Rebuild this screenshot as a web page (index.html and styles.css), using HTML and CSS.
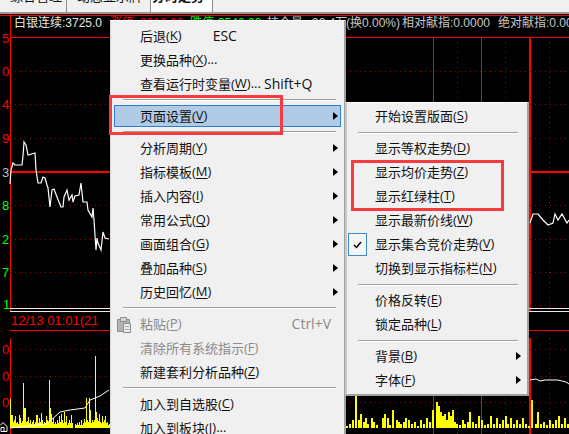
FILE: index.html
```html
<!DOCTYPE html>
<html lang="zh-CN">
<head>
  <meta charset="UTF-8" />
  <meta name="viewport" content="width=device-width, initial-scale=1.0" />
  <title>分时走势</title>
  <link rel="stylesheet" href="styles.css">
</head>
<body>
  <div class="app">
    <div class="tabs">
      <div class="tab tab-first">综合管理</div>
      <div class="tab tab-second">动态显示牌</div>
      <div class="tab tab-active">分时走势</div>
    </div>

    <div class="chart">
      <svg class="chart-svg" width="569" height="420" viewBox="0 14 569 420">
        <!-- solid grid -->
        <path class="line-red" d="M0 15H569M10 37H569M10 330H569M10 14V312M10 338V434M433 37V434M481 37V434" />
        <path class="line-red thick" d="M10 172H569M530 37V312M530 338V434" />
        <path class="line-white" d="M10 308.500H569M10 311.500H569" />

        <!-- dotted grid -->
        <path class="line-dot" d="M10 71.500H569M10 104.500H569M10 138.500H569M10 205.500H569M10 239.500H569M10 272.500H569M10 305.500H569M10 349.500H569M10 376.500H569M10 402.500H569M457.500 37V312M505.500 37V312M549.500 37V312M457.500 338V434M505.500 338V434M549.500 338V434" />

        <!-- volume bars -->
        <path class="line-yellow" d="M10.500 399V428M11.500 415V428M12.500 415V428M13.500 422V428M14.500 420V428M15.500 416V428M16.500 423V428M17.500 422V428M18.500 424V428M19.500 415V428M20.500 418V428M21.500 423V428M22.500 421V428M23.500 383V428M24.500 408V428M25.500 408V428M26.500 422V428M27.500 421V428M28.500 417V428M29.500 423V428M30.500 420V428M31.500 424V428M32.500 422V428M33.500 420V428M34.500 424V428M35.500 422V428M36.500 415V428M37.500 415V428M38.500 423V428M39.500 418V428M40.500 422V428M41.500 413V428M42.500 420V428M43.500 424V428M44.500 422V428M45.500 423V428M46.500 416V428M47.500 420V428M48.500 422V428M49.500 380V428M50.500 408V428M51.500 414V428M52.500 422V428M53.500 418V428M54.500 424V428M55.500 422V428M56.500 424V428M57.500 420V428M58.500 423V428M59.500 416V428M60.500 422V428M61.500 414V428M62.500 420V428M63.500 423V428M64.500 412V428M65.500 422V428M66.500 416V428M67.500 425V428M68.500 423V428M69.500 420V428M70.500 423V428M71.500 415V428M72.500 423V428M75.500 424V428M76.500 425V428M77.500 423V428M78.500 425V428M79.500 422V428M80.500 425V428M81.500 420V428M82.500 425V428M83.500 423V428M84.500 419V428M85.500 422V428M86.500 398V428M87.500 420V428M88.500 422V428M89.500 398V428M90.500 410V428M91.500 423V428M92.500 420V428M93.500 422V428M94.500 420V428M95.500 356V428M96.500 412V428M97.500 418V428M98.500 421V428M99.500 414V428M100.500 422V428M101.500 423V428M102.500 416V428M103.500 422V428M104.500 420V428M105.500 416V428M106.500 423V428M107.500 422V428M108.500 425V428M109.500 424V428" />
        <path class="line-yellow wide" d="M346.500 426V428M349.500 424V428M352.500 420V428M355.500 396V428M358.500 420V428M360.500 414V428M363.500 422V428M365.500 418V428M367.500 424V428M371.500 418V428M373.500 422V428M376.500 425V428M382.500 418V428M384.500 414V428M387.500 418V428M389.500 425V428M392.500 410V428M396.500 420V428M398.500 422V428M400.500 424V428M403.500 422V428M405.500 418V428M408.500 420V428M411.500 424V428M414.500 422V428M417.500 426V428M420.500 420V428M423.500 424V428M426.500 418V428M429.500 422V428M432.500 410V428M436.500 402V428M438.500 406V428M440.500 412V428M442.500 416V428M444.500 414V428M446.500 420V428M448.500 412V428M450.500 416V428M452.500 410V428M454.500 422V428M456.500 424V428M459.500 425V428M462.500 420V428M464.500 424V428M467.500 422V428M469.500 412V428M472.500 422V428M475.500 424V428M478.500 416V428M481.500 420V428M484.500 425V428M487.500 424V428M490.500 416V428M493.500 424V428M496.500 418V428M499.500 424V428M502.500 420V428M505.500 416V428M507.500 424V428M510.500 418V428M513.500 424V428M516.500 420V428M519.500 424V428M522.500 418V428M525.500 424V428M528.500 426V428M531.500 400V428M535.500 424V428M537.500 412V428M540.500 424V428M543.500 422V428M546.500 425V428M549.500 420V428M552.500 424V428M555.500 420V428M558.500 416V428M561.500 424V428M564.500 418V428M567.500 424V428" />

        <!-- price and average lines -->
        <polyline class="line-price" points="10,184 11,170 13,163 15,165 22,165 23,156 24,142 26,145 28,155 35,153 36,170 38,183 41,183 43,177 45,178 47,185 48,188 50,207 52,190 54,189 57,197 61,207 63,207 64,197 67,190 69,200 72,195 73,202 75,196 79,195 81,183 83,202 87,202 88,210 92,217 93,208 94,220 96,250 97,238 98,243 101,250 103,232 105,238 109,239" />
        <polyline class="line-price" points="530,223 533,214 538,214 543,220 548,225 553,223 555,214 558,220 562,214 567,223 569,220" />
        <polyline class="line-thin" points="10,428 30,426 45,424 50,421 60,412 70,410 85,408 90,400 100,396 109,390" />
        <polyline class="line-thin" points="530,380 536,379 540,381 545,380 558,380 566,382 569,384" />

        <!-- header text -->
        <text class="info" x="14" y="27" fill="#e8e8e8">白银连续:3725.0</text>
        <text class="info" x="110" y="27" fill="#ff0000">涨停</text>
        <text class="info" x="140" y="27" fill="#ff0000">3910.00</text>
        <text class="info" x="190" y="27" fill="#00ff00">跌停</text>
        <text class="info" x="218" y="27" fill="#00ff00">3540.00</text>
        <text class="info" x="267" y="27" fill="#c8c8c8">持仓量</text>
        <text class="info" x="312" y="27" fill="#c8c8c8">99.4万</text>
        <text class="info" x="346" y="27" fill="#c8c8c8">(换0.00%)</text>
        <text class="info" x="402" y="27" fill="#c8c8c8">相对献指:0.0000</text>
        <text class="info" x="498" y="27" fill="#c8c8c8">绝对献指:0.0000</text>
        <text class="time" x="11" y="325">12/13 01:01(21</text>

        <!-- y axis -->
        <g class="axis axis-red">
          <text x="2" y="43">5</text>
          <text x="2" y="76">0</text>
          <text x="2" y="109">4</text>
          <text x="2" y="143">9</text>
          <text x="2" y="354">0</text>
          <text x="2" y="381">0</text>
          <text x="2" y="407">0</text>
        </g>
        <text class="axis axis-gray" x="2" y="177">3</text>
        <g class="axis axis-green">
          <text x="2" y="210">8</text>
          <text x="2" y="244">2</text>
          <text x="2" y="277">7</text>
          <text x="3" y="309">1</text>
        </g>

        <path class="corner-icon" d="M0 425.500L3 422.500L7 426.500V431.500H1V427.500H4V431" />
      </svg>
    </div>

    <div class="menu menu-main">
      <div class="item">后退(<u>K</u>)<span class="key key-esc">ESC</span></div>
      <div class="item">更换品种(<u>X</u>)...</div>
      <div class="item">查看运行时变量(<u>W</u>)...<span class="key key-shift">Shift+Q</span></div>
      <div class="sep"></div>
      <div class="item item-on">页面设置(<u>V</u>)<i class="arrow"></i></div>
      <div class="sep"></div>
      <div class="item">分析周期(<u>Y</u>)<i class="arrow"></i></div>
      <div class="item">指标模板(<u>M</u>)<i class="arrow"></i></div>
      <div class="item">插入内容(<u>I</u>)<i class="arrow"></i></div>
      <div class="item">常用公式(<u>Q</u>)<i class="arrow"></i></div>
      <div class="item">画面组合(<u>G</u>)<i class="arrow"></i></div>
      <div class="item">叠加品种(<u>S</u>)<i class="arrow"></i></div>
      <div class="item">历史回忆(<u>M</u>)<i class="arrow"></i></div>
      <div class="sep"></div>
      <div class="item item-off">
        <svg class="paste-icon" width="15" height="17" viewBox="0 0 15 17">
          <path d="M1.500 3.500H13.500V15.500H1.500Z" fill="#b4b4b4" stroke="#8c8c8c" />
          <path d="M4.500 1.500H10.500V5.500H4.500Z" fill="#d8d8d8" stroke="#8c8c8c" />
          <path d="M7.500 7.500H14.500V16.500H7.500Z" fill="#ececec" stroke="#8c8c8c" />
          <path d="M9 10.500H13M9 13.500H13" stroke="#a8a8a8" />
        </svg>
        粘贴(<u>P</u>)<span class="key key-ctrl">Ctrl+V</span>
      </div>
      <div class="item item-off">清除所有系统指示(<u>F</u>)</div>
      <div class="item">新建套利分析品种(<u>Z</u>)</div>
      <div class="sep"></div>
      <div class="item">加入到自选股(<u>C</u>)</div>
      <div class="item">加入到板块(<u>J</u>)...</div>
    </div>

    <div class="menu menu-sub">
      <div class="item">开始设置版面(<u>S</u>)</div>
      <div class="sep"></div>
      <div class="item">显示等权走势(<u>D</u>)</div>
      <div class="item">显示均价走势(<u>Z</u>)</div>
      <div class="item">显示红绿柱(<u>T</u>)</div>
      <div class="item">显示最新价线(<u>W</u>)</div>
      <div class="item">
        <span class="check">
          <svg width="9" height="8" viewBox="0 0 9 8"><path d="M1 4L3.500 6.500L8 1" fill="none" stroke="#000" stroke-width="1.500" /></svg>
        </span>
        显示集合竞价走势(<u>V</u>)
      </div>
      <div class="item">切换到显示指标栏(<u>N</u>)</div>
      <div class="sep"></div>
      <div class="item">价格反转(<u>E</u>)</div>
      <div class="item">锁定品种(<u>L</u>)</div>
      <div class="sep"></div>
      <div class="item">背景(<u>B</u>)<i class="arrow"></i></div>
      <div class="item">字体(<u>F</u>)<i class="arrow"></i></div>
    </div>

    <div class="mark mark-page"></div>
    <div class="mark mark-show"></div>
  </div>
</body>
</html>
```

FILE: styles.css
```css
body {
  margin: 0;
  font-family: "Open Sans", "Noto Sans CJK SC", sans-serif;
  font-size: 13px;
  color: #111;
  background: #000;
}
.app {
  position: relative;
  width: 569px;
  height: 434px;
  overflow: hidden;
  display: flex;
  flex-direction: column;
}

/* tabs, only the bottom of them is on the picture */
.tabs {
  display: flex;
  align-items: flex-end;
  height: 12px;
  flex: none;
  overflow: hidden;
  background: #f0f0f0;
  border-bottom: 2px solid #9a9a9a;
}
.tab {
  height: 22px;
  line-height: 13px;
  white-space: nowrap;
  box-sizing: border-box;
  border-right: 1px solid #8c8c8c;
}
.tab-first {
  width: 67px;
  padding-left: 10px;
}
.tab-second {
  width: 84px;
  padding-left: 10px;
}
.tab-active {
  width: 62px;
  padding-left: 1px;
  font-weight: bold;
  background: #fff;
}

/* chart */
.chart {
  flex: 1;
  background: #000;
}
.chart-svg {
  display: block;
}
.chart-svg path,
.chart-svg polyline {
  fill: none;
}
.line-red {
  stroke: #ff0000;
  stroke-width: 1;
  shape-rendering: crispEdges;
}
.line-red.thick {
  stroke-width: 2;
}
.line-white {
  stroke: #e8e8e8;
  shape-rendering: crispEdges;
}
.line-dot {
  stroke: #a00000;
  stroke-dasharray: 1 4;
  shape-rendering: crispEdges;
}
.line-yellow {
  stroke: #ffff00;
  shape-rendering: crispEdges;
}
.line-yellow.wide {
  stroke-width: 2;
}
.line-price {
  stroke: #fff;
  stroke-width: 1.2;
}
.line-thin {
  stroke: #fff;
  stroke-width: 1;
}
.info {
  font-family: "Liberation Sans", "Noto Sans CJK SC", sans-serif;
  font-size: 12px;
}
.time {
  font-family: "Liberation Sans", sans-serif;
  font-size: 13px;
  fill: #ff0000;
}
.axis {
  font-family: "Liberation Sans", sans-serif;
  font-size: 13px;
}
.axis-red {
  fill: #ff0000;
}
.axis-gray {
  fill: #c0c0c0;
}
.axis-green {
  fill: #00ff00;
}
.corner-icon {
  stroke: #fff;
}

/* menus */
.menu {
  position: absolute;
  display: flex;
  flex-direction: column;
  box-sizing: border-box;
  background: #f0f0f0;
  border-right: 2px solid #a0a0a0;
  border-bottom: 2px solid #a0a0a0;
  border-top: 1px solid #fff;
}
.menu-main {
  left: 110px;
  top: 20px;
  width: 236px;
  height: 430px;
  padding: 3px 3px 0 3px;
  border-left: 1px solid #d8d8d8;
}
.menu-sub {
  left: 345px;
  top: 102px;
  width: 184px;
  height: 294px;
  padding: 1px 3px 0 2px;
  border-left: 2px solid #c8c8c8;
}
.item {
  position: relative;
  display: flex;
  align-items: center;
  flex: none;
  height: 22px;
  margin: 1px 0;
  padding: 0 0 2px 26px;
  white-space: nowrap;
  box-sizing: border-box;
}
.item u {
  text-decoration-thickness: 1px;
  text-underline-offset: 2px;
}
.item-on {
  background: #b0cbe6;
  outline: 1px solid #2f7fd0;
  outline-offset: -1px;
}
.item-off {
  color: #8a8a8a;
}
.sep {
  flex: none;
  height: 8px;
  box-sizing: border-box;
  padding-top: 3px;
  margin: 0 5px 0 9px;
}
.sep::after {
  content: "";
  display: block;
  height: 1px;
  background: #a0a0a0;
  box-shadow: 0 1px 0 #fff;
}
.menu-sub .sep {
  margin: 0 6px 0 9px;
  padding-top: 4px;
}
.arrow {
  position: absolute;
  right: 3px;
  top: 7px;
  border-left: 5px solid #000;
  border-top: 4px solid transparent;
  border-bottom: 4px solid transparent;
}
.key {
  font-size: 14px;
}
.key-esc {
  margin-left: 31px;
}
.key-shift {
  margin-left: 3px;
}
.key-ctrl {
  position: absolute;
  right: 10px;
}
.paste-icon {
  position: absolute;
  left: 2px;
  top: 3px;
}
.check {
  position: absolute;
  left: -1px;
  top: 0;
  width: 19px;
  height: 23px;
  box-sizing: border-box;
  display: flex;
  align-items: center;
  justify-content: center;
  background: #f6f6f6;
  border: 1px solid #3c8ad0;
}

/* red boxes drawn on the screenshot */
.mark {
  position: absolute;
  box-sizing: border-box;
  border: 3px solid #f93a3e;
}
.mark-page {
  left: 109px;
  top: 95px;
  width: 174px;
  height: 40px;
}
.mark-show {
  left: 351px;
  top: 160px;
  width: 153px;
  height: 51px;
}
```
